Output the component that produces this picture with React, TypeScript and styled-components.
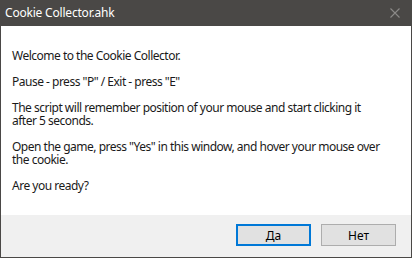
import styled, { createGlobalStyle } from 'styled-components';

const GlobalStyle = createGlobalStyle`
  html, body {
    margin: 0;
    padding: 0;
    background: #ffffff;
  }

  body {
    font-family: 'Segoe UI', 'Noto Sans', 'Liberation Sans', sans-serif;
  }
`;

const paragraphs = [
  'Welcome to the Cookie Collector.',
  'Pause - press "P" / Exit - press "E"',
  'The script will remember position of your mouse and start clicking it\nafter 5 seconds.',
  'Open the game, press "Yes" in this window, and hover your mouse over\nthe cookie.',
  'Are you ready?',
];

const CloseIcon = (): JSX.Element => (
  <svg width="10" height="10" viewBox="0 0 10 10">
    <path d="M0.5 0.5 L9.5 9.5 M9.5 0.5 L0.5 9.5" stroke="#8c8a88" strokeWidth="1.1" fill="none" />
  </svg>
);

const App = (): JSX.Element => {
  return (
    <>
      <GlobalStyle />
      <Window>
        <TitleBar>
          <Title>Cookie Collector.ahk</Title>
          <CloseButton>
            <CloseIcon />
          </CloseButton>
        </TitleBar>
        <Content>
          {paragraphs.map((text) => (
            <Paragraph key={text}>{text}</Paragraph>
          ))}
        </Content>
        <Footer>
          <Button primary>Да</Button>
          <Button>Нет</Button>
        </Footer>
      </Window>
    </>
  );
};

export default App;

const Window = styled.div`
  width: 412px;
  height: 258px;
  box-sizing: border-box;
  display: flex;
  flex-direction: column;
  border: 1px solid #4a4846;
  border-top: none;
  background: #ffffff;
`;

const TitleBar = styled.div`
  height: 26px;
  flex-shrink: 0;
  display: flex;
  align-items: center;
  justify-content: space-between;
  background: #4a4846;
  margin: 0 -1px;
`;

const Title = styled.span`
  color: #ffffff;
  font-size: 12px;
  letter-spacing: -0.2px;
  padding-left: 5px;
  padding-bottom: 1px;
  font-family: 'Segoe UI', 'Noto Sans', sans-serif;
`;

const CloseButton = styled.div`
  width: 34px;
  height: 26px;
  display: flex;
  align-items: center;
  justify-content: center;
`;

const Content = styled.div`
  flex: 1;
  padding: 23px 11px 0;
  background: #ffffff;
`;

const Paragraph = styled.p`
  margin: 0 0 13px;
  font-size: 12px;
  line-height: 13px;
  letter-spacing: -0.5px;
  color: #1a1a1a;
  white-space: pre;
  font-family: 'Segoe UI', 'Noto Sans', sans-serif;
`;

const Footer = styled.div`
  height: 42px;
  flex-shrink: 0;
  box-sizing: border-box;
  display: flex;
  justify-content: flex-end;
  align-items: flex-start;
  gap: 10px;
  padding: 9px 15px 0 0;
  background: #f0f0f0;
`;

const Button = styled.button<{ primary?: boolean }>`
  width: 75px;
  height: 22px;
  box-sizing: border-box;
  padding: 0;
  margin: 0;
  background: #e1e1e1;
  border: ${(props) => (props.primary ? '2px solid #0078d7' : '1px solid #adadad')};
  font-size: 12px;
  color: #000000;
  font-family: 'Segoe UI', 'Noto Sans', sans-serif;
  display: flex;
  align-items: center;
  justify-content: center;
`;
